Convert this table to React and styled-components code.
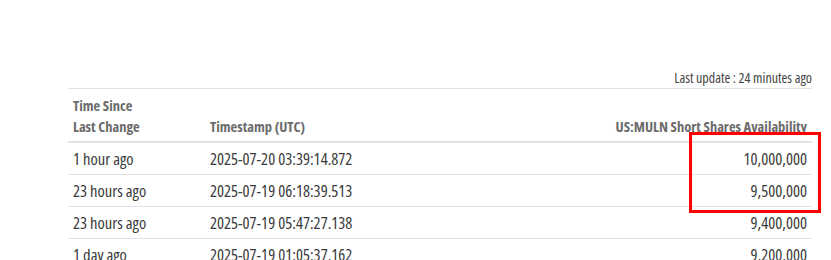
import React from "react";
import styled, { createGlobalStyle } from "styled-components";

const Global = createGlobalStyle`
  html, body { margin: 0; padding: 0; background: #fff; }
  body { font-family: "Open Sans", "Liberation Sans", sans-serif; font-stretch: 87.5%; }
`;

const Page = styled.div`
  position: relative;
  width: 831px;
  height: 260px;
  overflow: hidden;
  padding: 68px 19px 0 68px;
  box-sizing: border-box;
`;

const Updated = styled.div`
  text-align: right;
  font-size: 14px;
  line-height: 20px;
  color: #444;
`;

const Table = styled.table`
  width: 100%;
  border-collapse: collapse;
  border-top: 1px solid #dee2e6;
  color: #3a3a3a;
  font-size: 16.5px;
`;

const Th = styled.th`
  text-align: ${(p) => (p.$right ? "right" : "left")};
  vertical-align: bottom;
  font-weight: 700;
  font-size: 14.5px;
  font-stretch: 75%;
  color: #6b6b6b;
  line-height: 21px;
  padding: 6px 5px 4px;
  border-bottom: 2px solid #dee2e6;
  width: ${(p) => p.$w || "auto"};
`;

const Td = styled.td`
  text-align: ${(p) => (p.$right ? "right" : "left")};
  line-height: 21px;
  padding: 5px 5px;
  border-bottom: 1px solid #dee2e6;
`;

const Highlight = styled.div`
  position: absolute;
  left: 689px;
  top: 132px;
  width: 132px;
  height: 81px;
  border: 3px solid #ff0000;
  box-sizing: border-box;
  pointer-events: none;
`;

const rows = [
  ["1 hour ago", "2025-07-20 03:39:14.872", "10,000,000"],
  ["23 hours ago", "2025-07-19 06:18:39.513", "9,500,000"],
  ["23 hours ago", "2025-07-19 05:47:27.138", "9,400,000"],
  ["1 day ago", "2025-07-19 01:05:37.162", "9,200,000"],
];

export default function App() {
  return (
    <>
      <Global />
      <Page>
        <Updated>Last update : 24 minutes ago</Updated>
        <Table>
          <thead>
            <tr>
              <Th $w="127px">
                Time Since
                <br />
                Last Change
              </Th>
              <Th>Timestamp (UTC)</Th>
              <Th $right>US:MULN Short Shares Availability</Th>
            </tr>
          </thead>
          <tbody>
            {rows.map((r, i) => (
              <tr key={i}>
                <Td>{r[0]}</Td>
                <Td>{r[1]}</Td>
                <Td $right>{r[2]}</Td>
              </tr>
            ))}
          </tbody>
        </Table>
        <Highlight />
      </Page>
    </>
  );
}
